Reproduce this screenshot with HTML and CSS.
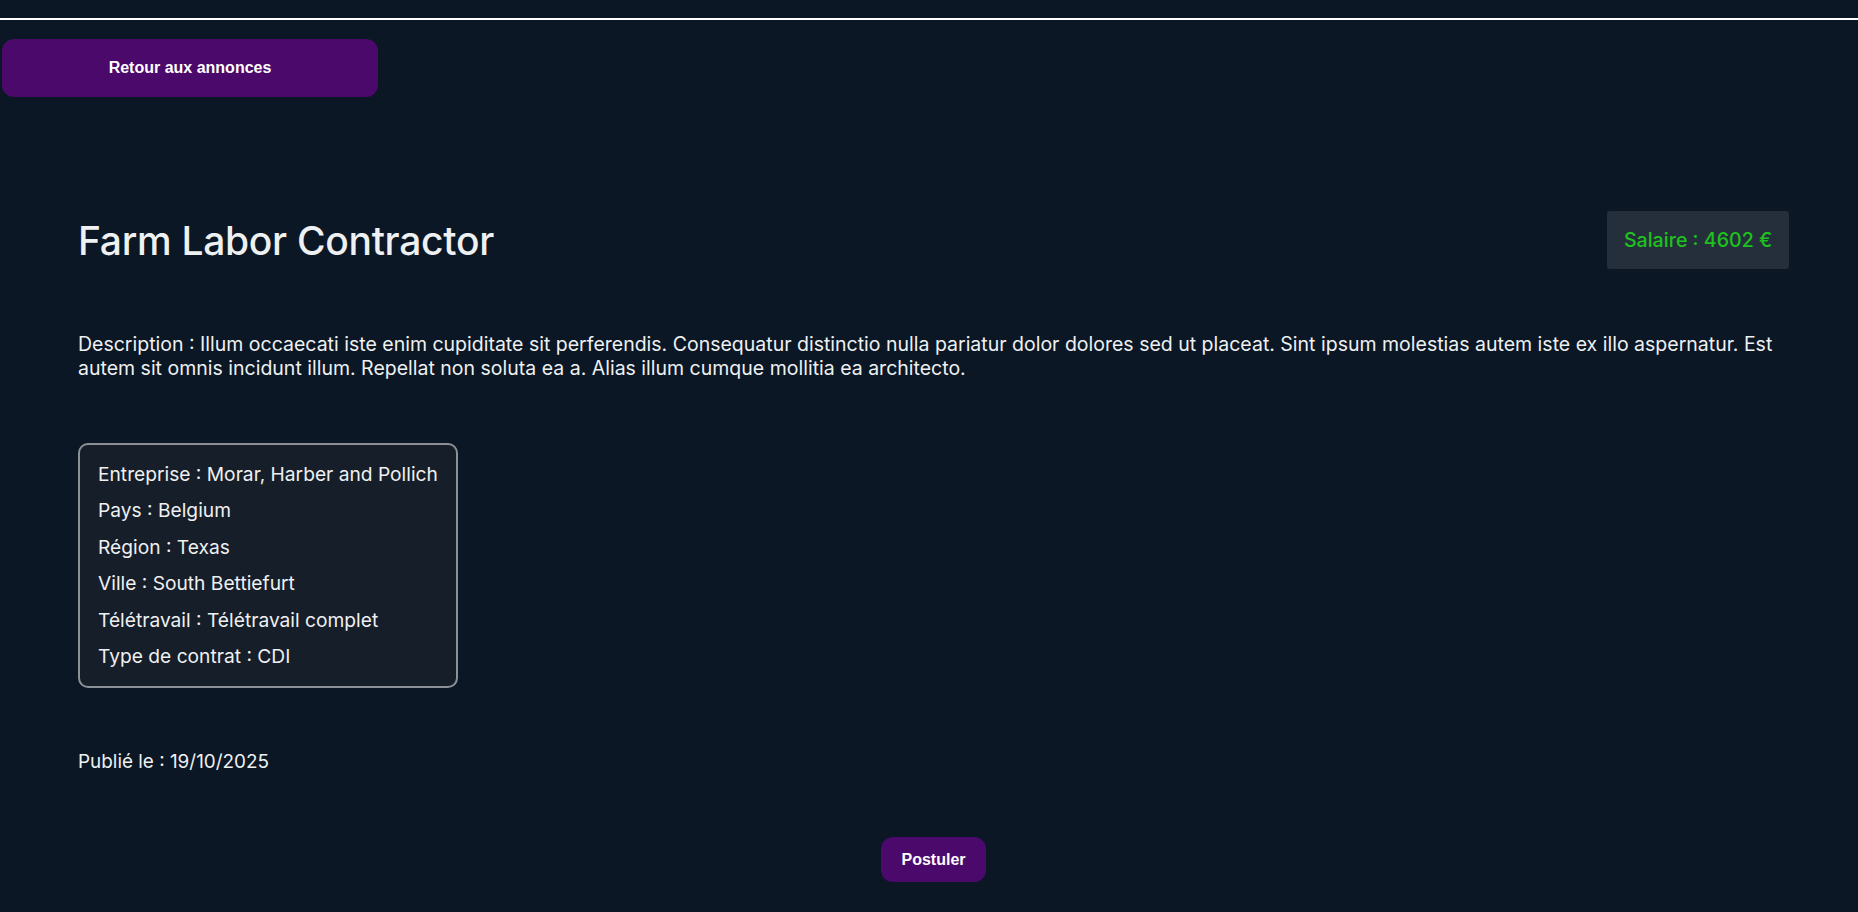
FILE: index.html
```html
<!DOCTYPE html>
<html lang="fr">
<head>
<meta charset="utf-8">
<title>Farm Labor Contractor</title>
<link rel="stylesheet" href="styles.css">
</head>
<body>
<header class="topbar"></header>
<nav class="back-row">
  <a class="btn btn-back" href="#">Retour aux annonces</a>
</nav>
<main class="offer">
  <div class="offer-head">
    <h1 class="offer-title">Farm Labor Contractor</h1>
    <div class="salary">Salaire : 4602 €</div>
  </div>
  <p class="description">Description : Illum occaecati iste enim cupiditate sit perferendis. Consequatur distinctio nulla pariatur dolor dolores sed ut placeat. Sint ipsum molestias autem iste ex illo aspernatur. Est autem sit omnis incidunt illum. Repellat non soluta ea a. Alias illum cumque mollitia ea architecto.</p>
  <ul class="details">
    <li>Entreprise : Morar, Harber and Pollich</li>
    <li>Pays : Belgium</li>
    <li>Région : Texas</li>
    <li>Ville : South Bettiefurt</li>
    <li>Télétravail : Télétravail complet</li>
    <li>Type de contrat : CDI</li>
  </ul>
  <p class="published">Publié le : 19/10/2025</p>
  <div class="apply-row">
    <a class="btn btn-apply" href="#">Postuler</a>
  </div>
</main>
</body>
</html>
```
FILE: styles.css
```css
* { box-sizing: border-box; }
html, body { margin: 0; padding: 0; }
body {
  background: #0b1724;
  color: #eef0f2;
  font-family: "Inter", "Liberation Sans", sans-serif;
  min-height: 100vh;
}
.topbar {
  height: 20px;
  border-bottom: 2px solid #ffffff;
}
.back-row {
  padding: 19px 0 0 2px;
}
.btn {
  display: inline-flex;
  align-items: center;
  justify-content: center;
  background: #4b096b;
  color: #ffffff;
  font-family: "Liberation Sans", Arial, sans-serif;
  font-weight: bold;
  font-size: 16px;
  text-decoration: none;
  border-radius: 12px;
}
.btn-back {
  width: 376px;
  height: 58px;
}
.offer {
  padding: 114px 69px 0 78px;
}
.offer-head {
  display: flex;
  justify-content: space-between;
  align-items: center;
}
.offer-title {
  margin: 0;
  font-size: 39px;
  font-weight: 500;
  letter-spacing: -0.3px;
  color: #eef0f2;
}
.salary {
  width: 182px;
  height: 58px;
  display: flex;
  align-items: center;
  justify-content: center;
  background: #252f3b;
  border-radius: 3px;
  color: #1dc21d;
  font-size: 19.6px;
  font-weight: 500;
}
.description {
  margin: 63px 0 0;
  font-size: 19.5px;
  line-height: 24px;
}
.details {
  list-style: none;
  margin: 63px 0 0;
  padding: 11px 18px 12px;
  width: 380px;
  background: #161e29;
  border: 2px solid #8c9097;
  border-radius: 10px;
  font-size: 19.2px;
}
.details li {
  line-height: 36.4px;
}
.published {
  margin: 62px 0 0;
  font-size: 18.9px;
  line-height: 24px;
}
.apply-row {
  display: flex;
  justify-content: center;
  padding: 63px 0 40px;
}
.btn-apply {
  width: 105px;
  height: 45px;
}
```
